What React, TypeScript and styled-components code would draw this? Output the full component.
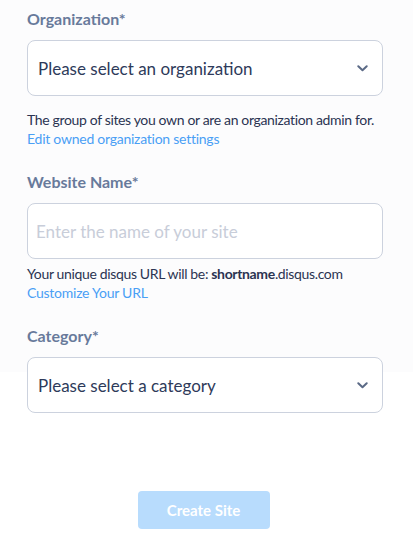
import styled, { createGlobalStyle } from "styled-components";

const GlobalStyle = createGlobalStyle`
  * { box-sizing: border-box; }
  html, body {
    margin: 0;
    padding: 0;
    background: #ffffff;
    font-family: Lato, "Open Sans", "Liberation Sans", sans-serif;
  }
`;

const Page = styled.div`
  width: 413px;
  min-height: 541px;
  background: linear-gradient(to bottom, #fcfcfd 0, #fcfcfd 372px, #ffffff 372px);
  padding: 10px 30px 0 27px;
  display: flex;
  flex-direction: column;
`;

const Field = styled.div<{ $gap?: number }>`
  display: flex;
  flex-direction: column;
  margin-bottom: ${(p) => p.$gap ?? 0}px;
`;

const Label = styled.label`
  font-size: 16px;
  font-weight: 700;
  color: #687a9b;
  line-height: 18px;
  margin-bottom: 12px;
`;

const Box = styled.div`
  height: 56px;
  width: 356px;
  border: 1px solid #ccd2de;
  border-radius: 8px;
  background: #ffffff;
  display: flex;
  align-items: center;
  justify-content: space-between;
  padding: 0 14px 0 10px;
  font-size: 17px;
  color: #2e3a5a;
`;

const Placeholder = styled.span`
  color: #c8cdd9;
  margin-left: -2px;
`;

const Help = styled.div<{ $top?: number }>`
  font-size: 14px;
  letter-spacing: -0.35px;
  line-height: 19px;
  color: #2b3452;
  white-space: nowrap;
  margin-top: ${(p) => p.$top ?? 14}px;

  b {
    font-weight: 700;
  }
`;

const Link = styled.a`
  display: block;
  color: #4a9ff5;
  font-size: 14px;
  letter-spacing: -0.25px;
  line-height: 19px;
  text-decoration: none;
`;

const Footer = styled.div`
  display: flex;
  justify-content: center;
  padding-right: 3px;
  margin-top: 78px;
`;

const Button = styled.button`
  width: 132px;
  height: 38px;
  border: none;
  border-radius: 4px;
  background: #b8dcfd;
  color: #ffffff;
  font-family: inherit;
  font-size: 15px;
  font-weight: 700;
`;

const Chevron = () => (
  <svg width="11" height="7" viewBox="0 0 11 7">
    <path d="M1.3 1.3 L5.5 5.3 L9.7 1.3" fill="none" stroke="#5b6a86" strokeWidth="2" strokeLinecap="round" strokeLinejoin="round" />
  </svg>
);

export default function App() {
  return (
    <>
      <GlobalStyle />
      <Page>
        <Field $gap={25}>
          <Label>Organization*</Label>
          <Box>
            <span>Please select an organization</span>
            <Chevron />
          </Box>
          <Help>The group of sites you own or are an organization admin for.</Help>
          <Link href="#">Edit owned organization settings</Link>
        </Field>
        <Field $gap={25}>
          <Label>Website Name*</Label>
          <Box>
            <Placeholder>Enter the name of your site</Placeholder>
          </Box>
          <Help $top={5}>
            Your unique disqus URL will be: <b>shortname</b>.disqus.com
          </Help>
          <Link href="#">Customize Your URL</Link>
        </Field>
        <Field>
          <Label>Category*</Label>
          <Box>
            <span>Please select a category</span>
            <Chevron />
          </Box>
        </Field>
        <Footer>
          <Button>Create Site</Button>
        </Footer>
      </Page>
    </>
  );
}
